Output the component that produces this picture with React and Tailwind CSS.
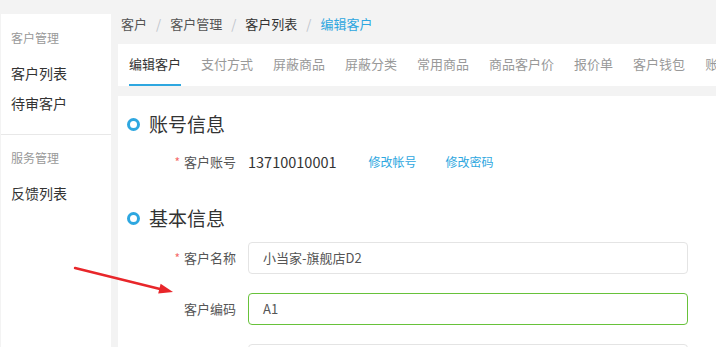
import React from 'react'

const font = { fontFamily: '"Noto Sans CJK SC", "Noto Sans", sans-serif' }

const tabs = ['编辑客户', '支付方式', '屏蔽商品', '屏蔽分类', '常用商品', '商品客户价', '报价单', '客户钱包', '账户流水']

function SectionTitle({ children }) {
  return (
    <div className="flex items-center h-6">
      <span className="ml-[9px] w-[13px] h-[13px] rounded-full border-[3px] border-[#2ea7e0]" />
      <span className="ml-[9px] text-[19px] leading-6 text-[#333]">{children}</span>
    </div>
  )
}

function Label({ required, children }) {
  return (
    <div className="w-[118px] shrink-0 flex justify-end items-center text-[13px] text-[#555]">
      {required && <span className="text-[#f56c6c] mr-[4px] text-[12px]">*</span>}
      {children}
    </div>
  )
}

export default function App() {
  return (
    <div className="relative w-[716px] h-[347px] overflow-hidden bg-[#f3f3f3] flex" style={font}>
      {/* sidebar */}
      <div className="ml-[1px] mt-[14px] w-[110px] bg-white shrink-0">
        <div className="pl-[10px] pt-[16px] text-[12px] text-[#999] leading-4">客户管理</div>
        <div className="pl-[10px] mt-[17px] text-[14px] text-[#333] leading-5">客户列表</div>
        <div className="pl-[10px] mt-[10px] text-[14px] text-[#333] leading-5">待审客户</div>
        <div className="mt-[21px] border-t border-[#e8e8e8]" />
        <div className="pl-[10px] mt-[15px] text-[12px] text-[#999] leading-4">服务管理</div>
        <div className="pl-[10px] mt-[17px] text-[14px] text-[#333] leading-5">反馈列表</div>
      </div>

      {/* main */}
      <div className="ml-[7px] flex-1 flex flex-col min-w-0">
        <div className="h-[44px] shrink-0 flex items-center pl-[3px] pt-[4px] text-[13px] whitespace-nowrap">
          <span className="text-[#555]">客户</span>
          <span className="mx-[9px] text-[#c0c4cc]">/</span>
          <span className="text-[#555]">客户管理</span>
          <span className="mx-[9px] text-[#c0c4cc]">/</span>
          <span className="text-[#333]">客户列表</span>
          <span className="mx-[9px] text-[#c0c4cc]">/</span>
          <span className="text-[#2ea7e0]">编辑客户</span>
        </div>

        <div className="h-[42px] shrink-0 bg-white flex pl-[11px] gap-[20px] whitespace-nowrap overflow-hidden">
          {tabs.map((t, i) => (
            <div
              key={t}
              className={
                'h-full shrink-0 flex items-center text-[13px] border-b-2 ' +
                (i === 0 ? 'text-[#333] border-[#2ea7e0]' : 'text-[#999] border-transparent')
              }
            >
              {t}
            </div>
          ))}
        </div>

        <div className="mt-[10px] flex-1 shrink-0 bg-white pt-[16px] pr-[28px]">
          <SectionTitle>账号信息</SectionTitle>

          <div className="mt-[10px] h-8 flex items-center">
            <Label required>客户账号</Label>
            <span className="ml-[12px] text-[14.5px] text-[#333]">13710010001</span>
            <span className="ml-[32px] text-[12px] text-[#2ea7e0]">修改帐号</span>
            <span className="ml-[29px] text-[12px] text-[#2ea7e0]">修改密码</span>
          </div>

          <div className="mt-[28px]">
            <SectionTitle>基本信息</SectionTitle>
          </div>

          <div className="mt-[12px] flex items-center">
            <Label required>客户名称</Label>
            <div className="ml-[12px] flex-1 h-[32px] border border-[#e4e4e4] rounded flex items-center px-[14px] text-[13px] text-[#555]">
              小当家-旗舰店D2
            </div>
          </div>

          <div className="mt-[19px] flex items-center">
            <Label>客户编码</Label>
            <div className="ml-[12px] flex-1 h-[32px] border border-[#67c23a] rounded flex items-center px-[14px] text-[13px] text-[#555]">
              A1
            </div>
          </div>

          <div className="mt-[19px] flex items-center">
            <Label></Label>
            <div className="ml-[12px] flex-1 h-[32px] border border-[#e4e4e4] rounded" />
          </div>
        </div>
      </div>

      {/* annotation arrow */}
      <svg className="absolute left-0 top-0 pointer-events-none" width="716" height="347">
        <line x1="75" y1="268" x2="162" y2="289.5" stroke="#e8262a" strokeWidth="2.4" strokeLinecap="round" />
        <polygon points="173,292 160.6,283.8 158.2,293.4" fill="#e8262a" />
      </svg>
    </div>
  )
}
